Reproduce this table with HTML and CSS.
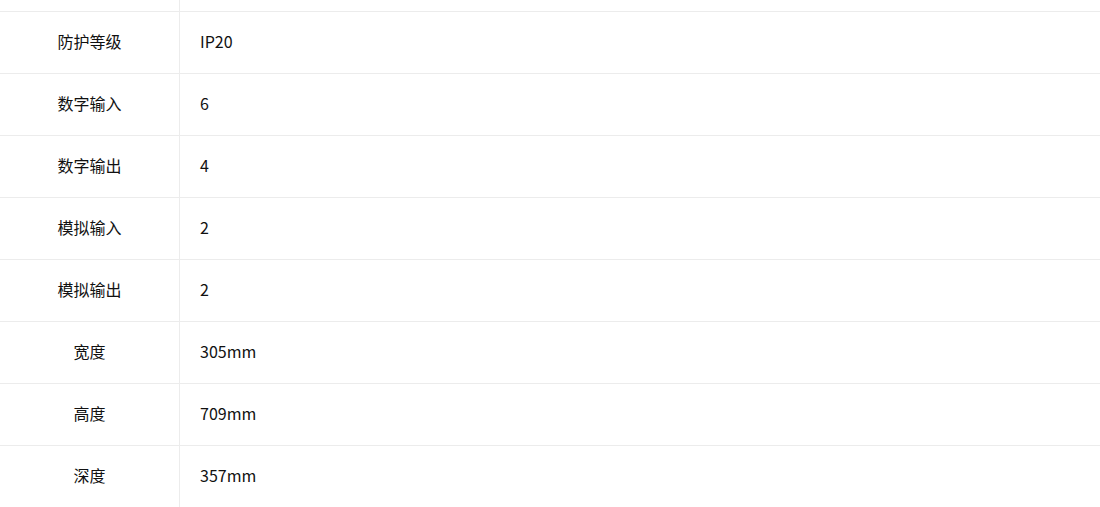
FILE: index.html
```html
<!DOCTYPE html>
<html lang="zh-CN">
<head>
    <meta charset="UTF-8">
    <meta name="viewport" content="width=device-width, initial-scale=1.0">
    <title>产品参数</title>
    <link rel="stylesheet" href="styles.css">
</head>
<body>
    <table class="spec-table">
        <tr class="cut"><td class="name"></td><td class="value"></td></tr>
        <tr><td class="name">防护等级</td><td class="value">IP20</td></tr>
        <tr><td class="name">数字输入</td><td class="value">6</td></tr>
        <tr><td class="name">数字输出</td><td class="value">4</td></tr>
        <tr><td class="name">模拟输入</td><td class="value">2</td></tr>
        <tr><td class="name">模拟输出</td><td class="value">2</td></tr>
        <tr><td class="name">宽度</td><td class="value">305mm</td></tr>
        <tr><td class="name">高度</td><td class="value">709mm</td></tr>
        <tr><td class="name">深度</td><td class="value">357mm</td></tr>
    </table>
</body>
</html>
```

FILE: styles.css
```css
html, body {
    margin: 0;
    height: 100%;
    overflow: hidden;
    background: #fff;
}

body {
    font-family: "Noto Sans CJK SC", "Microsoft YaHei", sans-serif;
    font-size: 16px;
    color: #111;
}

.spec-table {
    width: 100%;
    border-collapse: collapse;
}

.spec-table td {
    height: 57px;
    padding: 0 0 4px;
    line-height: 20px;
    border-bottom: 1px solid #ececec;
    vertical-align: middle;
}

.spec-table .cut td {
    height: 11px;
    padding: 0;
}

.spec-table .name {
    width: 179px;
    text-align: center;
    border-right: 1px solid #ececec;
}

.spec-table .value {
    padding-left: 20px;
}
```
